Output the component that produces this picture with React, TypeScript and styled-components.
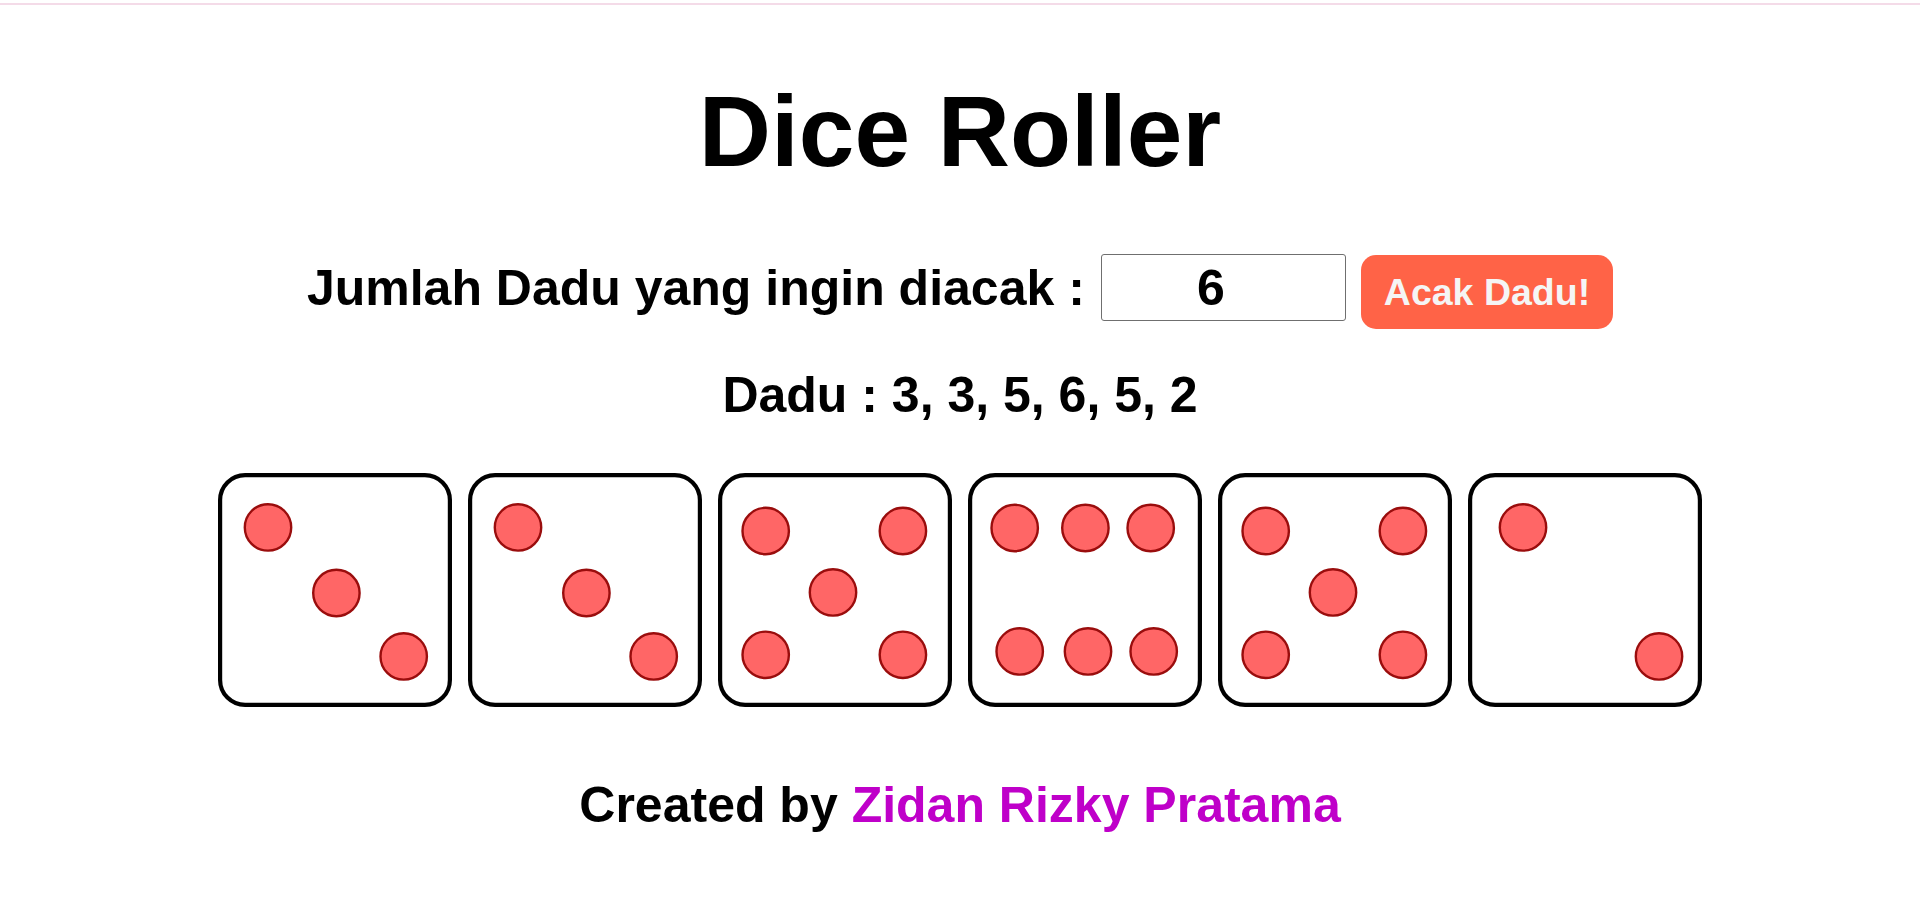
import React, { useState } from "react";
import styled, { createGlobalStyle } from "styled-components";

const GlobalStyle = createGlobalStyle`
  html, body {
    margin: 0;
    padding: 0;
    background: #ffffff;
  }
  body {
    font-family: "Liberation Sans", Arial, Helvetica, sans-serif;
    color: #000000;
  }
  input[type="number"] {
    -moz-appearance: textfield;
  }
`;

const Page = styled.div`
  display: flex;
  flex-direction: column;
  align-items: center;
  width: 100%;
`;

const TopRule = styled.div`
  align-self: stretch;
  height: 2px;
  margin-top: 3px;
  background: #f4dbe8;
`;

const Title = styled.h1`
  margin: 69px 0 0;
  font-size: 100px;
  line-height: 115px;
  font-weight: 700;
  text-align: center;
`;

const Controls = styled.div`
  display: flex;
  align-items: baseline;
  justify-content: center;
  gap: 15px;
  margin-top: 65px;
`;

const Label = styled.label`
  font-size: 50px;
  line-height: 57.5px;
  font-weight: 700;
  margin-right: 1px;
`;

const CountInput = styled.input`
  box-sizing: border-box;
  width: 245px;
  height: 67px;
  padding: 0 12px 0 2px;
  border: 1px solid #6f6f6f;
  border-radius: 3px;
  font-family: "Liberation Sans", Arial, sans-serif;
  font-size: 50px;
  font-weight: 700;
  text-align: center;
  color: #000000;
  background: #ffffff;
`;

const RollButton = styled.button`
  box-sizing: border-box;
  height: 74px;
  padding: 15px 23px;
  border: none;
  border-radius: 15px;
  background: #ff6347;
  color: #f5f5f5;
  font-family: "Liberation Sans", Arial, sans-serif;
  font-size: 37.5px;
  line-height: 43px;
  font-weight: 700;
  cursor: pointer;
`;

const Result = styled.p`
  margin: 38px 0 0;
  font-size: 50px;
  line-height: 57.5px;
  font-weight: 700;
  text-align: center;
`;

const DiceRow = styled.div`
  display: flex;
  justify-content: center;
  gap: 16px;
  margin-top: 48px;
`;

const DieFace = styled.svg`
  display: block;
  width: 234px;
  height: 234px;
  flex: none;
`;

const Footer = styled.p`
  margin: 70px 0 0;
  font-size: 50px;
  line-height: 57.5px;
  font-weight: 700;
  text-align: center;
`;

const Author = styled.span`
  color: #bf00c9;
`;

type Pip = [number, number];

const PIPS: Record<number, Pip[]> = {
  1: [[117, 117]],
  2: [
    [55, 54.4],
    [191, 183.4],
  ],
  3: [
    [50, 54.4],
    [118.4, 120],
    [185.7, 183.4],
  ],
  4: [
    [50, 55],
    [184, 55],
    [50, 180],
    [184, 180],
  ],
  5: [
    [47.7, 58],
    [184.9, 58],
    [115, 119.4],
    [47.7, 181.8],
    [184.9, 181.8],
  ],
  6: [
    [46.7, 55],
    [117.4, 55],
    [182.7, 55],
    [51.7, 178.4],
    [120, 178.4],
    [185.7, 178.4],
  ],
};

const Die: React.FC<{ value: number }> = ({ value }) => (
  <DieFace viewBox="0 0 234 234" aria-label={`Dadu ${value}`}>
    <rect
      x="2.1"
      y="2.1"
      width="229.8"
      height="229.8"
      rx="25"
      ry="25"
      fill="#ffffff"
      stroke="#000000"
      strokeWidth="4.2"
    />
    {PIPS[value].map(([cx, cy], i) => (
      <circle
        key={i}
        cx={cx}
        cy={cy}
        r="23.2"
        fill="#ff6666"
        stroke="#9a0d0d"
        strokeWidth="2.4"
      />
    ))}
  </DieFace>
);

export default function App() {
  const [count, setCount] = useState<string>("6");
  const [dice, setDice] = useState<number[]>([3, 3, 5, 6, 5, 2]);

  const roll = () => {
    const n = Math.max(1, Math.min(12, parseInt(count, 10) || 1));
    const next: number[] = [];
    for (let i = 0; i < n; i++) next.push(1 + Math.floor(Math.random() * 6));
    setDice(next);
  };

  return (
    <>
      <GlobalStyle />
      <Page>
        <TopRule />
        <Title>Dice Roller</Title>
        <Controls>
          <Label htmlFor="jumlah">Jumlah Dadu yang ingin diacak :</Label>
          <CountInput
            id="jumlah"
            type="number"
            min={1}
            value={count}
            onChange={(e) => setCount(e.target.value)}
          />
          <RollButton type="button" onClick={roll}>
            Acak Dadu!
          </RollButton>
        </Controls>
        <Result>Dadu : {dice.join(", ")}</Result>
        <DiceRow>
          {dice.map((v, i) => (
            <Die key={i} value={v} />
          ))}
        </DiceRow>
        <Footer>
          Created by <Author>Zidan Rizky Pratama</Author>
        </Footer>
      </Page>
    </>
  );
}
